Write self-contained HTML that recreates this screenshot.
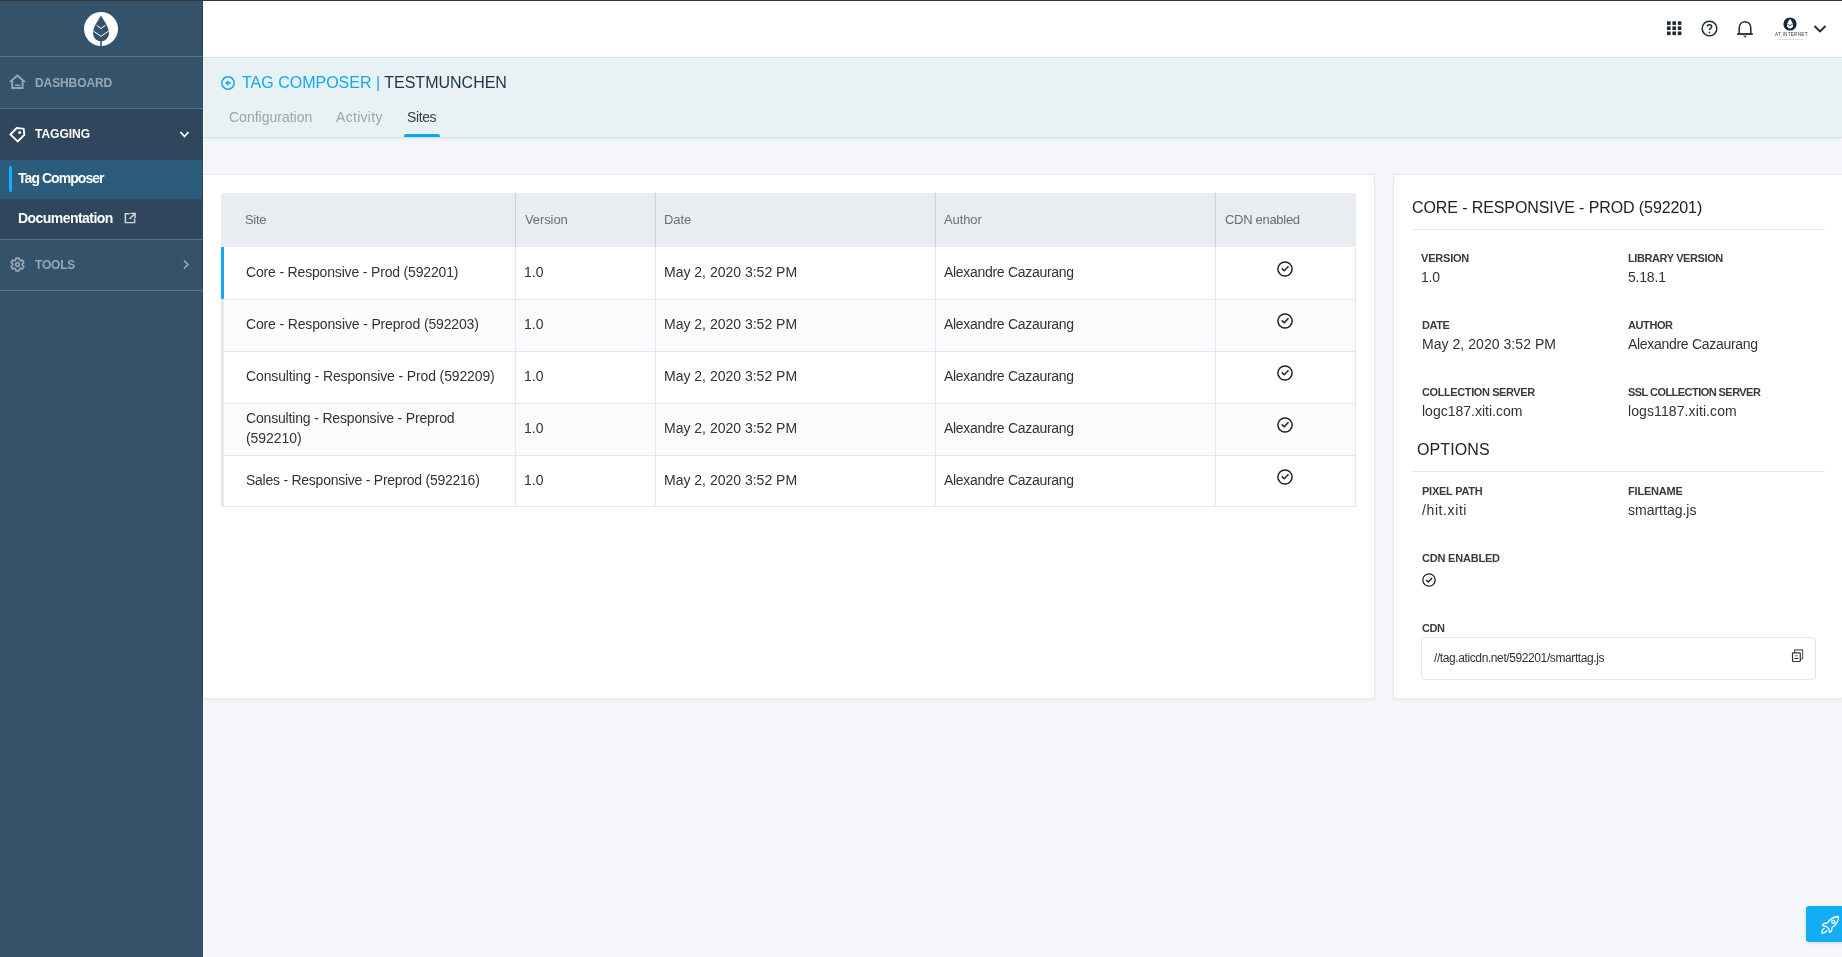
<!DOCTYPE html>
<html><head><meta charset="utf-8">
<style>
*{box-sizing:border-box;margin:0;padding:0}
html,body{width:1842px;height:957px;overflow:hidden}
body{position:relative;background:#F4F6F9;font-family:"Liberation Sans",sans-serif;color:#333}
.t{position:absolute;white-space:nowrap;will-change:transform}
.b{position:absolute}
svg{position:absolute;overflow:visible}
</style></head>
<body>
<div class="b" style="left:203px;top:0;width:1639px;height:57px;background:#fff"></div><div class="b" style="left:203px;top:57px;width:1639px;height:81px;background:#E8F1F4;border-top:1px solid #D3E3E9;border-bottom:1px solid #D3E3E9;box-shadow:0 1px 4px rgba(40,60,90,0.06)"></div><div class="b" style="left:203px;top:58px;width:1px;height:79px;background:#F4FAFB"></div><div class="b" style="left:203px;top:138px;width:1px;height:819px;background:#FDFEFE"></div><div class="b" style="left:203px;top:174px;width:1172px;height:525px;background:#fff;border-top:1px solid #E3E8EF;border-right:1px solid #E3E8EF;border-bottom:1px solid #E3E8EF;box-shadow:0 2px 3px rgba(30,50,90,0.04)"></div><div class="b" style="left:1393px;top:174px;width:449px;height:525px;background:#fff;border-top:1px solid #E3E8EF;border-left:1px solid #E3E8EF;border-bottom:1px solid #E3E8EF;box-shadow:0 2px 3px rgba(30,50,90,0.04)"></div><div class="b" style="left:0;top:0;width:203px;height:957px;background:#34526A"></div><div class="b" style="left:0;top:109px;width:202px;height:130px;background:#30465C"></div><div class="b" style="left:0;top:160px;width:202px;height:39px;background:#2B5C7C"></div><div class="b" style="left:9px;top:166px;width:3px;height:26px;background:#12B0F8;border-radius:1.5px"></div><div class="b" style="left:202px;top:0;width:1px;height:957px;background:#2C475D"></div><div class="b" style="left:0;top:56px;width:203px;height:1px;background:#5B7286"></div><div class="b" style="left:0;top:108px;width:203px;height:1px;background:#5B7286"></div><div class="b" style="left:0;top:239px;width:203px;height:1px;background:#5B7286"></div><div class="b" style="left:0;top:290px;width:203px;height:1px;background:#5B7286"></div><div class="b" style="left:0;top:0;width:1842px;height:1px;background:#333"></div><div class="b" style="left:0;top:0;width:203px;height:1px;background:#3b3734"></div><svg style="left:84px;top:12px" width="34" height="34" viewBox="0 0 34 34">
<circle cx="17" cy="17" r="17" fill="#fff"/>
<path d="M17 3.6 C 14 9, 9 15, 9 21 C 9 25.5, 12.5 29, 16.2 29.2 L 16.2 34 L 17.8 34 L 17.8 29.2 C 21.5 29, 25 25.5, 25 21 C 25 15, 20 9, 17 3.6 Z" fill="#34526A"/>
<path d="M12.6 13.3 L17 16.4 L21.4 13.3 M9.3 19 L17 24.3 L24.7 19" stroke="#fff" stroke-width="1" fill="none"/>
</svg><div class="t" style="left:35px;top:76.84px;font-size:12px;line-height:12px;color:#97A7B5;font-weight:700;letter-spacing:-0.1px;">DASHBOARD</div>
<div class="t" style="left:35.2px;top:128.14px;font-size:12px;line-height:12px;color:#fff;font-weight:700;letter-spacing:0px;">TAGGING</div>
<div class="t" style="left:18px;top:170.95px;font-size:14px;line-height:14px;color:#fff;font-weight:700;letter-spacing:-0.95px;">Tag Composer</div>
<div class="t" style="left:18px;top:211.15px;font-size:14px;line-height:14px;color:#fff;font-weight:700;letter-spacing:-0.55px;">Documentation</div>
<div class="t" style="left:35.3px;top:258.94px;font-size:12px;line-height:12px;color:#97A7B5;font-weight:700;letter-spacing:-0.2px;">TOOLS</div>
<svg style="left:9px;top:74px" width="17" height="16" viewBox="0 0 17 16">
<path d="M0.9 8 L8.4 1.5 L15.9 8" stroke="#97A7B5" stroke-width="1.9" fill="none" stroke-linejoin="miter"/>
<path d="M3.2 6.6 L3.2 14 L13.6 14 L13.6 6.6" stroke="#97A7B5" stroke-width="1.9" fill="none"/>
<path d="M5.8 11.3 L11.2 11.3" stroke="#97A7B5" stroke-width="1.5"/>
</svg><svg style="left:9px;top:126px" width="17" height="17" viewBox="0 0 17 17">
<path d="M1.4 8.5 L7.7 2 L14.7 2.7 L15.3 9 L8.7 15.5 Z" stroke="#fff" stroke-width="1.8" fill="none" stroke-linejoin="miter"/>
<circle cx="10.7" cy="6.5" r="1.5" fill="#fff"/>
</svg><svg style="left:179px;top:130px" width="11" height="9" viewBox="0 0 11 9">
<path d="M1.5 2 L5.5 6.5 L9.5 2" stroke="#fff" stroke-width="1.8" fill="none"/>
</svg><svg style="left:123.5px;top:212px" width="12" height="12" viewBox="0 0 13 12">
<path d="M6 1.5 L1.5 1.5 L1.5 11 L11.5 11 L11.5 6.5" stroke="#D0D6DC" stroke-width="1.6" fill="none"/>
<path d="M7 1 L12 1 L12 6 M12 1 L6 7" stroke="#D0D6DC" stroke-width="1.6" fill="none"/>
</svg><svg style="left:10px;top:257px" width="15" height="15" viewBox="0 0 15 15">
<path d="M5.66 2.96 L6.02 1.07 L8.98 1.07 L9.34 2.96 L10.52 3.64 L12.33 3.00 L13.81 5.57 L12.35 6.82 L12.35 8.18 L13.81 9.43 L12.33 12.00 L10.52 11.36 L9.34 12.04 L8.98 13.93 L6.02 13.93 L5.66 12.04 L4.48 11.36 L2.67 12.00 L1.19 9.43 L2.65 8.18 L2.65 6.82 L1.19 5.57 L2.67 3.00 L4.48 3.64 Z" stroke="#97A7B5" stroke-width="1.7" fill="none" stroke-linejoin="round"/>
<circle cx="7.5" cy="7.5" r="1.9" stroke="#97A7B5" stroke-width="1.7" fill="none"/>
</svg><svg style="left:181.5px;top:259px" width="9" height="11" viewBox="0 0 9 11">
<path d="M1.9 1.5 L5.9 5.5 L1.9 9.5" stroke="#97A7B5" stroke-width="1.7" fill="none"/>
</svg><svg style="left:1667.3px;top:21.2px" width="15" height="15" viewBox="0 0 15 15"><rect x="0" y="0.3" width="3.6" height="3.6" fill="#1C2B36"/><rect x="0" y="5.4" width="3.6" height="3.6" fill="#1C2B36"/><rect x="0" y="10.5" width="3.6" height="3.6" fill="#1C2B36"/><rect x="5.4" y="0.3" width="3.6" height="3.6" fill="#1C2B36"/><rect x="5.4" y="5.4" width="3.6" height="3.6" fill="#1C2B36"/><rect x="5.4" y="10.5" width="3.6" height="3.6" fill="#1C2B36"/><rect x="10.8" y="0.3" width="3.6" height="3.6" fill="#1C2B36"/><rect x="10.8" y="5.4" width="3.6" height="3.6" fill="#1C2B36"/><rect x="10.8" y="10.5" width="3.6" height="3.6" fill="#1C2B36"/></svg><svg style="left:1701px;top:20px" width="17" height="17" viewBox="0 0 17 17">
<circle cx="8.5" cy="8.5" r="7.3" stroke="#1C2B36" stroke-width="1.5" fill="none"/>
<path d="M6.3 6.6 C6.3 4.2, 10.7 4.2, 10.7 6.6 C10.7 8.3, 8.5 8.3, 8.5 10" stroke="#1C2B36" stroke-width="1.5" fill="none"/>
<circle cx="8.5" cy="12.4" r="0.9" fill="#1C2B36"/>
</svg><svg style="left:1736px;top:20px" width="18" height="18" viewBox="0 0 18 18">
<path d="M3.2 14 L3.2 8 C3.2 -0.5, 14.8 -0.5, 14.8 8 L14.8 14" stroke="#1C2B36" stroke-width="1.5" fill="none"/>
<path d="M1.2 14 L16.8 14" stroke="#1C2B36" stroke-width="1.8"/>
<path d="M6.9 15.7 L11.1 15.7 L9 17.6 Z" fill="#1C2B36"/>
</svg><svg style="left:1772px;top:16px" width="36" height="26" viewBox="0 0 36 26">
<circle cx="18" cy="8" r="6.6" fill="#15283A"/>
<path d="M18 2.8 C16.5 5, 15 7, 15 9.5 C15 11.3, 16.5 12.5, 18 12.5 C19.5 12.5, 21 11.3, 21 9.5 C21 7, 19.5 5, 18 2.8Z" fill="#fff"/>
<path d="M15.5 8.2 L18 9.6 L20.5 8.2" stroke="#15283A" stroke-width="0.8" fill="none"/>
</svg><div class="t" style="left:1774.7px;top:32.62px;font-size:4.7px;line-height:4.7px;color:#2F3E4E;font-weight:400;letter-spacing:0.22px;">AT INTERNET</div>
<div class="b" style="left:1777px;top:38.5px;width:26px;height:1px;background:#D9DCE1"></div><svg style="left:1813px;top:24px" width="14" height="10" viewBox="0 0 14 10">
<path d="M1.5 2 L7 7.5 L12.5 2" stroke="#1C2B36" stroke-width="1.8" fill="none"/>
</svg><svg style="left:221px;top:76px" width="14" height="14" viewBox="0 0 14 14">
<circle cx="7" cy="7" r="6.2" stroke="#12A8F0" stroke-width="1.5" fill="none"/>
<path d="M10 7 L6 7 M7.5 5 L5.3 7 L7.5 9" stroke="#12A8F0" stroke-width="1.6" fill="none"/>
</svg><div class="t" style="left:241.5px;top:75.26px;font-size:16px;line-height:16px;color:#12A8F0;font-weight:400;letter-spacing:0px;"><span style="color:#12A8F0">TAG COMPOSER |</span> <span style="color:#1D3346">TESTMUNCHEN</span></div>
<div class="t" style="left:229px;top:110.15px;font-size:14px;line-height:14px;color:#A0A4A8;font-weight:400;letter-spacing:0px;">Configuration</div>
<div class="t" style="left:336px;top:110.15px;font-size:14px;line-height:14px;color:#A0A4A8;font-weight:400;letter-spacing:0.3px;">Activity</div>
<div class="t" style="left:406.5px;top:110.15px;font-size:14px;line-height:14px;color:#3A3F44;font-weight:400;letter-spacing:-0.4px;">Sites</div>
<div class="b" style="left:404px;top:134px;width:36px;height:3px;background:#05A8F5;border-radius:2px 2px 0 0"></div><div class="b" style="left:221px;top:193px;width:1135px;height:54px;background:#E9ECF0;border-radius:3px 3px 0 0"></div><div class="t" style="left:245px;top:213.00px;font-size:13px;line-height:13px;color:#6A6F75;font-weight:400;letter-spacing:-0.3px;">Site</div>
<div class="t" style="left:525px;top:213.00px;font-size:13px;line-height:13px;color:#6A6F75;font-weight:400;letter-spacing:-0.1px;">Version</div>
<div class="t" style="left:664px;top:213.00px;font-size:13px;line-height:13px;color:#6A6F75;font-weight:400;letter-spacing:-0.1px;">Date</div>
<div class="t" style="left:944px;top:213.00px;font-size:13px;line-height:13px;color:#6A6F75;font-weight:400;letter-spacing:-0.1px;">Author</div>
<div class="t" style="left:1224.5px;top:213.00px;font-size:13px;line-height:13px;color:#6A6F75;font-weight:400;letter-spacing:-0.3px;">CDN enabled</div>
<div class="b" style="left:221px;top:247px;width:1135px;height:53px;background:#fff;border-bottom:1px solid #E3E8F0"></div><div class="b" style="left:221px;top:247px;width:3px;height:52px;background:#12A8F0;border-radius:0 0 1px 1px"></div><div class="t" style="left:245.5px;top:265.15px;font-size:14px;line-height:14px;color:#333;font-weight:400;letter-spacing:-0.17px;">Core - Responsive - Prod (592201)</div>
<div class="t" style="left:524px;top:265.15px;font-size:14px;line-height:14px;color:#333;font-weight:400;letter-spacing:0px;">1.0</div>
<div class="t" style="left:664px;top:265.15px;font-size:14px;line-height:14px;color:#333;font-weight:400;letter-spacing:0px;">May 2, 2020 3:52 PM</div>
<div class="t" style="left:944px;top:265.15px;font-size:14px;line-height:14px;color:#333;font-weight:400;letter-spacing:-0.3px;">Alexandre Cazaurang</div>
<svg style="left:1277px;top:261.2px" width="16" height="16" viewBox="0 0 16 16">
<circle cx="8" cy="8" r="7.1" stroke="#222" stroke-width="1.5" fill="none"/>
<path d="M4.7 7.4 L7.2 9.7 L11.5 5.2" stroke="#222" stroke-width="1.5" fill="none"/>
</svg><div class="b" style="left:221px;top:300px;width:1135px;height:52px;background:#FAFBFD;border-bottom:1px solid #E3E8F0"></div><div class="b" style="left:221px;top:300px;width:3px;height:52px;background:#E6E8EB;"></div><div class="t" style="left:245.5px;top:317.15px;font-size:14px;line-height:14px;color:#333;font-weight:400;letter-spacing:-0.15px;">Core - Responsive - Preprod (592203)</div>
<div class="t" style="left:524px;top:317.15px;font-size:14px;line-height:14px;color:#333;font-weight:400;letter-spacing:0px;">1.0</div>
<div class="t" style="left:664px;top:317.15px;font-size:14px;line-height:14px;color:#333;font-weight:400;letter-spacing:0px;">May 2, 2020 3:52 PM</div>
<div class="t" style="left:944px;top:317.15px;font-size:14px;line-height:14px;color:#333;font-weight:400;letter-spacing:-0.3px;">Alexandre Cazaurang</div>
<svg style="left:1277px;top:313.2px" width="16" height="16" viewBox="0 0 16 16">
<circle cx="8" cy="8" r="7.1" stroke="#222" stroke-width="1.5" fill="none"/>
<path d="M4.7 7.4 L7.2 9.7 L11.5 5.2" stroke="#222" stroke-width="1.5" fill="none"/>
</svg><div class="b" style="left:221px;top:352px;width:1135px;height:52px;background:#fff;border-bottom:1px solid #E3E8F0"></div><div class="b" style="left:221px;top:352px;width:3px;height:52px;background:#E6E8EB;"></div><div class="t" style="left:245.5px;top:369.15px;font-size:14px;line-height:14px;color:#333;font-weight:400;letter-spacing:-0.13px;">Consulting - Responsive - Prod (592209)</div>
<div class="t" style="left:524px;top:369.15px;font-size:14px;line-height:14px;color:#333;font-weight:400;letter-spacing:0px;">1.0</div>
<div class="t" style="left:664px;top:369.15px;font-size:14px;line-height:14px;color:#333;font-weight:400;letter-spacing:0px;">May 2, 2020 3:52 PM</div>
<div class="t" style="left:944px;top:369.15px;font-size:14px;line-height:14px;color:#333;font-weight:400;letter-spacing:-0.3px;">Alexandre Cazaurang</div>
<svg style="left:1277px;top:365.2px" width="16" height="16" viewBox="0 0 16 16">
<circle cx="8" cy="8" r="7.1" stroke="#222" stroke-width="1.5" fill="none"/>
<path d="M4.7 7.4 L7.2 9.7 L11.5 5.2" stroke="#222" stroke-width="1.5" fill="none"/>
</svg><div class="b" style="left:221px;top:404px;width:1135px;height:52px;background:#FAFBFD;border-bottom:1px solid #E3E8F0"></div><div class="b" style="left:221px;top:404px;width:3px;height:52px;background:#E6E8EB;"></div><div class="t" style="left:245.5px;top:411.15px;font-size:14px;line-height:14px;color:#333;font-weight:400;letter-spacing:-0.17px;">Consulting - Responsive - Preprod</div>
<div class="t" style="left:245.5px;top:431.15px;font-size:14px;line-height:14px;color:#333;font-weight:400;letter-spacing:-0.05px;">(592210)</div>
<div class="t" style="left:524px;top:421.15px;font-size:14px;line-height:14px;color:#333;font-weight:400;letter-spacing:0px;">1.0</div>
<div class="t" style="left:664px;top:421.15px;font-size:14px;line-height:14px;color:#333;font-weight:400;letter-spacing:0px;">May 2, 2020 3:52 PM</div>
<div class="t" style="left:944px;top:421.15px;font-size:14px;line-height:14px;color:#333;font-weight:400;letter-spacing:-0.3px;">Alexandre Cazaurang</div>
<svg style="left:1277px;top:417.2px" width="16" height="16" viewBox="0 0 16 16">
<circle cx="8" cy="8" r="7.1" stroke="#222" stroke-width="1.5" fill="none"/>
<path d="M4.7 7.4 L7.2 9.7 L11.5 5.2" stroke="#222" stroke-width="1.5" fill="none"/>
</svg><div class="b" style="left:221px;top:456px;width:1135px;height:51px;background:#fff;border-bottom:1px solid #E3E8F0"></div><div class="b" style="left:221px;top:456px;width:3px;height:51px;background:#E6E8EB;"></div><div class="t" style="left:245.5px;top:473.15px;font-size:14px;line-height:14px;color:#333;font-weight:400;letter-spacing:-0.25px;">Sales - Responsive - Preprod (592216)</div>
<div class="t" style="left:524px;top:473.15px;font-size:14px;line-height:14px;color:#333;font-weight:400;letter-spacing:0px;">1.0</div>
<div class="t" style="left:664px;top:473.15px;font-size:14px;line-height:14px;color:#333;font-weight:400;letter-spacing:0px;">May 2, 2020 3:52 PM</div>
<div class="t" style="left:944px;top:473.15px;font-size:14px;line-height:14px;color:#333;font-weight:400;letter-spacing:-0.3px;">Alexandre Cazaurang</div>
<svg style="left:1277px;top:469.2px" width="16" height="16" viewBox="0 0 16 16">
<circle cx="8" cy="8" r="7.1" stroke="#222" stroke-width="1.5" fill="none"/>
<path d="M4.7 7.4 L7.2 9.7 L11.5 5.2" stroke="#222" stroke-width="1.5" fill="none"/>
</svg><div class="b" style="left:515px;top:193px;width:1px;height:54px;background:#CDD4DE"></div><div class="b" style="left:515px;top:247px;width:1px;height:260px;background:#E3E8F0"></div><div class="b" style="left:655px;top:193px;width:1px;height:54px;background:#CDD4DE"></div><div class="b" style="left:655px;top:247px;width:1px;height:260px;background:#E3E8F0"></div><div class="b" style="left:935px;top:193px;width:1px;height:54px;background:#CDD4DE"></div><div class="b" style="left:935px;top:247px;width:1px;height:260px;background:#E3E8F0"></div><div class="b" style="left:1215px;top:193px;width:1px;height:54px;background:#CDD4DE"></div><div class="b" style="left:1215px;top:247px;width:1px;height:260px;background:#E3E8F0"></div><div class="b" style="left:1355px;top:247px;width:1px;height:260px;background:#E3E8F0"></div><div class="t" style="left:1412px;top:200.46px;font-size:16px;line-height:16px;color:#222;font-weight:400;letter-spacing:-0.1px;">CORE - RESPONSIVE - PROD (592201)</div>
<div class="b" style="left:1412px;top:229px;width:413px;height:1px;background:#E3E8F0"></div><div class="t" style="left:1421px;top:252.69px;font-size:11px;line-height:11px;color:#3A3A3A;font-weight:700;letter-spacing:-0.2px;">VERSION</div>
<div class="t" style="left:1421px;top:270.15px;font-size:14px;line-height:14px;color:#333;font-weight:400;letter-spacing:-0.2px;">1.0</div>
<div class="t" style="left:1627.5px;top:252.69px;font-size:11px;line-height:11px;color:#3A3A3A;font-weight:700;letter-spacing:-0.4px;">LIBRARY VERSION</div>
<div class="t" style="left:1627.5px;top:270.15px;font-size:14px;line-height:14px;color:#333;font-weight:400;letter-spacing:-0.2px;">5.18.1</div>
<div class="t" style="left:1421.5px;top:319.69px;font-size:11px;line-height:11px;color:#3A3A3A;font-weight:700;letter-spacing:-0.4px;">DATE</div>
<div class="t" style="left:1421.5px;top:337.15px;font-size:14px;line-height:14px;color:#333;font-weight:400;letter-spacing:0.05px;">May 2, 2020 3:52 PM</div>
<div class="t" style="left:1627.5px;top:319.69px;font-size:11px;line-height:11px;color:#3A3A3A;font-weight:700;letter-spacing:-0.4px;">AUTHOR</div>
<div class="t" style="left:1627.5px;top:337.15px;font-size:14px;line-height:14px;color:#333;font-weight:400;letter-spacing:-0.3px;">Alexandre Cazaurang</div>
<div class="t" style="left:1421.5px;top:386.69px;font-size:11px;line-height:11px;color:#3A3A3A;font-weight:700;letter-spacing:-0.4px;">COLLECTION SERVER</div>
<div class="t" style="left:1421.5px;top:404.15px;font-size:14px;line-height:14px;color:#333;font-weight:400;letter-spacing:0.0px;">logc187.xiti.com</div>
<div class="t" style="left:1627.5px;top:386.69px;font-size:11px;line-height:11px;color:#3A3A3A;font-weight:700;letter-spacing:-0.55px;">SSL COLLECTION SERVER</div>
<div class="t" style="left:1627.5px;top:404.15px;font-size:14px;line-height:14px;color:#333;font-weight:400;letter-spacing:0.1px;">logs1187.xiti.com</div>
<div class="t" style="left:1417px;top:442.46px;font-size:16px;line-height:16px;color:#222;font-weight:400;letter-spacing:0.1px;">OPTIONS</div>
<div class="b" style="left:1412px;top:471px;width:413px;height:1px;background:#E3E8F0"></div><div class="t" style="left:1421.5px;top:485.69px;font-size:11px;line-height:11px;color:#3A3A3A;font-weight:700;letter-spacing:-0.25px;">PIXEL PATH</div>
<div class="t" style="left:1421.5px;top:503.15px;font-size:14px;line-height:14px;color:#333;font-weight:400;letter-spacing:0.6px;">/hit.xiti</div>
<div class="t" style="left:1627.5px;top:485.69px;font-size:11px;line-height:11px;color:#3A3A3A;font-weight:700;letter-spacing:-0.2px;">FILENAME</div>
<div class="t" style="left:1627.5px;top:503.15px;font-size:14px;line-height:14px;color:#333;font-weight:400;letter-spacing:0px;">smarttag.js</div>
<div class="t" style="left:1421.5px;top:552.69px;font-size:11px;line-height:11px;color:#3A3A3A;font-weight:700;letter-spacing:-0.2px;">CDN ENABLED</div>
<svg style="left:1422px;top:573px" width="14" height="14" viewBox="0 0 14 14">
<circle cx="7" cy="7" r="6.2" stroke="#222" stroke-width="1.3" fill="none"/>
<path d="M4 6.9 L6.3 9 L10.1 4.9" stroke="#222" stroke-width="1.4" fill="none"/>
</svg><div class="t" style="left:1421.5px;top:622.69px;font-size:11px;line-height:11px;color:#3A3A3A;font-weight:700;letter-spacing:-0.4px;">CDN</div>
<div class="b" style="left:1421px;top:637px;width:395px;height:43px;background:#fff;border:1px solid #E3E6EA;border-radius:4px"></div><div class="t" style="left:1433.5px;top:651.84px;font-size:12px;line-height:12px;color:#333;font-weight:400;letter-spacing:-0.4px;">//tag.aticdn.net/592201/smarttag.js</div>
<svg style="left:1790px;top:649px" width="14" height="14" viewBox="0 0 14 14">
<path d="M4.6 3.9 L4.6 1.2 Q4.6 0.9 4.9 0.9 L12.2 0.9 Q12.6 0.9 12.6 1.3 L12.6 9.6 Q12.6 10 12.2 10 L10.4 10" stroke="#555" stroke-width="1.1" fill="none"/>
<rect x="2.5" y="3.9" width="7.8" height="8.6" rx="0.7" stroke="#333" stroke-width="1.2" fill="#fff"/>
<path d="M4.8 6.8 L8 6.8" stroke="#777" stroke-width="1.1"/>
<path d="M4.8 9.5 L8 9.5" stroke="#222" stroke-width="1.1" stroke-linecap="round"/>
</svg><div class="b" style="left:1806px;top:906px;width:40px;height:36px;background:#12ADF5;border-radius:3px;box-shadow:0 1px 3px rgba(18,120,200,0.2)"></div><svg style="left:1820px;top:915px" width="20" height="20" viewBox="0 0 20 20">
<path d="M18.5 1.5 C13 1.5, 10 4, 7.5 8 L4 8.5 L2.5 10.5 L6.3 11.3 L8.7 13.7 L9.5 17.5 L11.5 16 L12 12.5 C16 10, 18.5 7, 18.5 1.5 Z" stroke="#fff" stroke-width="1.3" fill="none" stroke-linejoin="round"/>
<circle cx="13.3" cy="6.7" r="1.6" stroke="#fff" stroke-width="1.2" fill="none"/>
<path d="M5 13 C3 13.5, 2 15.5, 1.8 18.2 C4.5 18, 6.5 17, 7 15" stroke="#fff" stroke-width="1.2" fill="none"/>
</svg></body></html>
